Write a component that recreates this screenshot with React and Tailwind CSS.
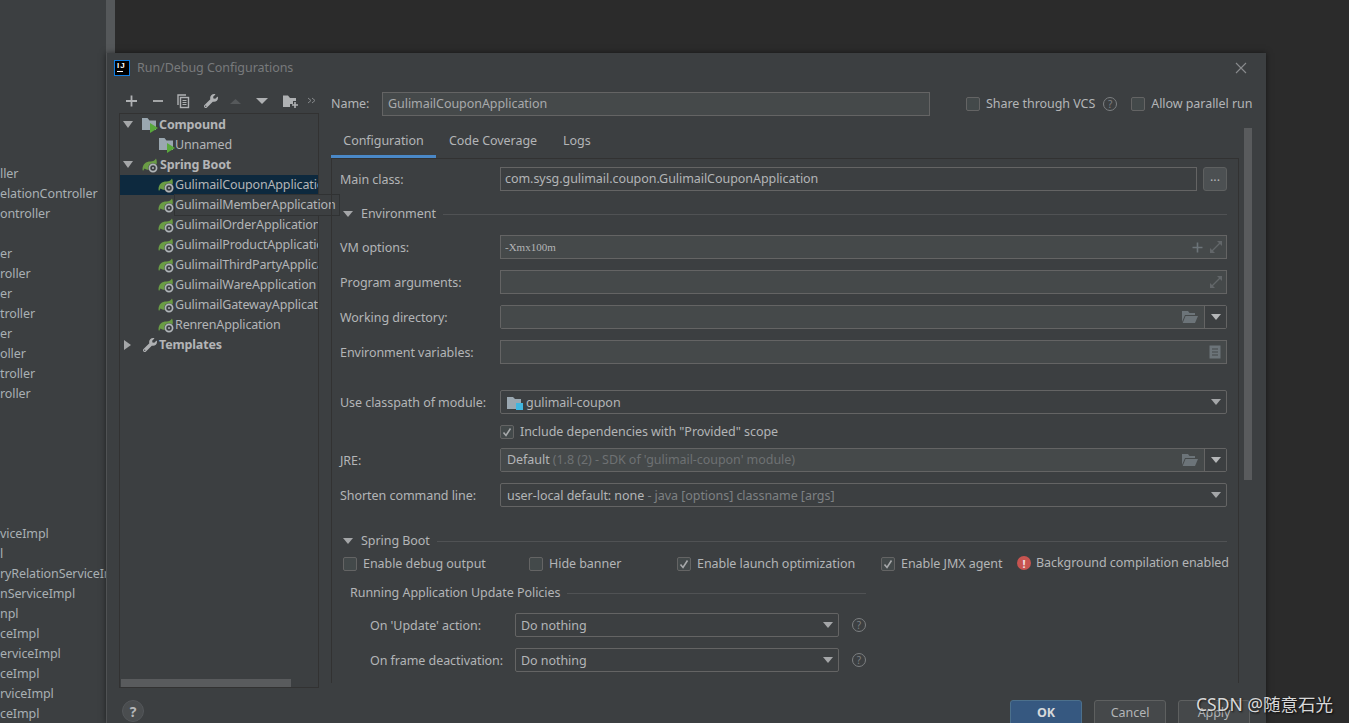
import React from "react";
import { FaWrench } from "react-icons/fa";

const FONT = "font-['Noto_Sans','Noto_Sans_CJK_SC',sans-serif]";

const bgTop = ["", "ller", "elationController", "ontroller", "", "er", "roller", "er", "troller", "er", "oller", "troller", "roller"];
const bgBottom = ["viceImpl", "l", "ryRelationServiceImpl", "nServiceImpl", "npl", "ceImpl", "erviceImpl", "ceImpl", "rviceImpl", "ceImpl"];

function Arrow({ dir = "down", color = "#9da0a2", size = 10 }) {
  const pts = dir === "down" ? "0,1 10,1 5,8" : dir === "right" ? "1,0 8,5 1,10" : "0,8 10,8 5,1";
  return (
    <svg width={size} height={size} viewBox="0 0 10 10" className="shrink-0">
      <polygon points={pts} fill={color} />
    </svg>
  );
}

function FlatArrow({ color = "#a4a6a8" }) {
  return (
    <svg width="10" height="6" viewBox="0 0 10 6" className="shrink-0">
      <polygon points="0,0 10,0 5,6" fill={color} />
    </svg>
  );
}

function SpringIcon() {
  return (
    <svg width="17" height="16" viewBox="0 0 17 16" className="shrink-0">
      <path d="M0.5 12.5 C0.5 7 4 4.5 8.5 4.5 C11 4.5 13 3.5 14 1.5 C15.5 5 15 8.5 12 11 C9 13.5 5 13.5 2.5 11.5 L1 14 Z" fill="#6a9c45" />
      <circle cx="11" cy="11" r="4.8" fill="#3c3f41" />
      <circle cx="11" cy="11" r="3.6" fill="none" stroke="#b0b5b8" strokeWidth="1.7" />
      <circle cx="11" cy="11" r="1" fill="#b0b5b8" />
    </svg>
  );
}

function CompoundIcon() {
  return (
    <svg width="16" height="16" viewBox="0 0 16 16" className="shrink-0">
      <path d="M0 1 H5.5 L7.5 3.5 H14 V13 H0 Z" fill="#9aa7b0" />
      <polygon points="8,6 16,11 8,16" fill="#59a83c" />
    </svg>
  );
}

function FolderOpen() {
  return (
    <svg width="16" height="14" viewBox="0 0 16 14" className="shrink-0">
      <path d="M0 1 H6 L7.5 3 H13 V5 H3 L0 12 Z" fill="#6c7479" />
      <path d="M3.5 6 H16 L13 13 H0.7 Z" fill="#6c7479" />
    </svg>
  );
}

function Expand() {
  return (
    <svg width="14" height="14" viewBox="0 0 14 14" className="shrink-0">
      <polygon points="8,1 13,1 13,6" fill="#626669" />
      <polygon points="1,8 1,13 6,13" fill="#626669" />
      <path d="M11 3 L3 11" stroke="#626669" strokeWidth="1.2" />
    </svg>
  );
}

function PlusSmall() {
  return (
    <svg width="11" height="11" viewBox="0 0 11 11" className="shrink-0">
      <path d="M0.5 5.5 H10.5 M5.5 0.5 V10.5" stroke="#6c7479" strokeWidth="1.6" />
    </svg>
  );
}

function Help({ color = "#7c7f81" }) {
  return (
    <span
      className="flex h-[14px] w-[14px] shrink-0 items-center justify-center rounded-full border text-[10px] leading-none"
      style={{ borderColor: color, color }}
    >
      ?
    </span>
  );
}

function Check({ on }) {
  return (
    <span className="flex h-[14px] w-[14px] shrink-0 items-center justify-center rounded-[2px] border border-[#646464] bg-[#43494a]">
      {on && (
        <svg width="10" height="10" viewBox="0 0 10 10">
          <path d="M1.5 5.5 L4 8.5 L8.5 1.5" fill="none" stroke="#a7a9ab" strokeWidth="1.6" />
        </svg>
      )}
    </span>
  );
}

function Field({ children, className = "", right, bg = "bg-[#45494a]" }) {
  return (
    <div className={`flex h-[24px] items-center justify-between border border-[#646464] pl-[4px] pr-[3px] ${bg} ${className}`}>
      <div className="min-w-0 truncate">{children}</div>
      {right && <div className="flex items-center gap-[6px]">{right}</div>}
    </div>
  );
}

function Row({ label, children, mt }) {
  return (
    <div className="flex items-center" style={{ marginTop: mt }}>
      <div className="w-[160px] shrink-0 whitespace-nowrap pt-[2px]">{label}</div>
      <div className="w-[727px]">{children}</div>
    </div>
  );
}

function Section({ title, mt }) {
  return (
    <div className="flex h-[20px] items-center pr-[11px]" style={{ marginTop: mt }}>
      <span className="ml-[3px] mr-[8px] flex"><FlatArrow /></span>
      <span className="shrink-0">{title}</span>
      <span className="ml-[7px] h-px flex-1 bg-[#505254]" />
    </div>
  );
}

function Combo({ children, className = "w-full pl-[6px]" }) {
  return (
    <div className={`flex h-[24px] items-center justify-between rounded-[2px] border border-[#646464] bg-[#3c3f41] pr-[5px] ${className}`}>
      <div className="flex min-w-0 items-center truncate pt-[2px]">{children}</div>
      <FlatArrow />
    </div>
  );
}

function BrowseCombo({ disabledText, text }) {
  return (
    <div className="flex h-[24px] items-stretch rounded-[2px] border border-[#646464]">
      <div className="flex flex-1 items-center justify-between bg-[#45494a] pl-[6px] pr-[6px]">
        <span>
          {text}
          {disabledText && <span className="text-[#6e7173]"> {disabledText}</span>}
        </span>
        <FolderOpen />
      </div>
      <div className="flex w-[22px] items-center justify-center border-l border-[#646464] bg-[#3c3f41]">
        <FlatArrow color="#b5b7b9" />
      </div>
    </div>
  );
}

function TreeRow({ icon, label, bold, arrow, selected, indent = 38 }) {
  return (
    <div className={`flex h-[20px] items-center whitespace-nowrap ${selected ? "bg-[#0d293e]" : ""}`} style={{ paddingLeft: arrow ? 3 : indent }}>
      {arrow && <span className="mr-[9px] flex"><Arrow dir={arrow} size={10} color="#a4a6a8" /></span>}
      {icon}
      <span className={bold ? "ml-px font-bold" : ""}>{label}</span>
    </div>
  );
}

function Toolbar() {
  const c = "#afb1b3";
  return (
    <div className="ml-[1px] flex h-[20px] items-center">
      <svg width="200" height="16" viewBox="0 0 200 16" className="shrink-0">
        <path d="M6 8 H17 M11.5 2.5 V13.5" stroke={c} strokeWidth="1.8" />
        <path d="M33 8 H43" stroke={c} strokeWidth="1.8" />
        <path d="M58 12 V2 H66" fill="none" stroke={c} strokeWidth="1.4" />
        <rect x="60.5" y="4.5" width="8" height="10" fill="none" stroke={c} strokeWidth="1.4" />
        <path d="M62.5 7.5 H66.5 M62.5 9.5 H66.5 M62.5 11.5 H66.5" stroke={c} strokeWidth="1" />
        <FaWrench x="84" y="1" size="14" color={c} />
        <polygon points="110,11 121,11 115.5,6" fill="#56595b" />
        <polygon points="136,5 148,5 142,11" fill={c} />
        <path d="M163 2.5 H168 L170 5 H176 V8 H173 V11 H170 V14 H163 Z" fill={c} />
        <path d="M172 12 H178 M175 9 V15" stroke={c} strokeWidth="1.6" />
        <path d="M188 5 L191 7.5 L188 10 M192 5 L195 7.5 L192 10" fill="none" stroke="#85888a" strokeWidth="1" />
      </svg>
    </div>
  );
}

export default function App() {
  return (
    <div className={`relative flex h-[723px] w-[1349px] overflow-hidden bg-[#2b2b2b] text-[12.5px] tracking-[-0.05px] text-[#b3b5b7] ${FONT}`}>
      <aside className="h-full w-[106px] shrink-0 overflow-hidden bg-[#3c3f41] whitespace-nowrap pt-[144px] tracking-[-0.1px] text-[#a9b0b4]">
        {bgTop.map((t, i) => (
          <div key={i} className="h-[20px] leading-[20px]">{t}</div>
        ))}
        <div className="h-[120px]" />
        {bgBottom.map((t, i) => (
          <div key={i} className="h-[20px] leading-[20px]">{t}</div>
        ))}
      </aside>
      <div className="h-full w-[9px] shrink-0 bg-[#55585a]" />

      {/* dialog window */}
      <div className="absolute left-[106px] top-[53px] flex h-[670px] w-[1160px] flex-col overflow-hidden border-l border-[#505254] bg-[#3c3f41] shadow-[0_0_6px_rgba(0,0,0,0.5)]">
        {/* title bar */}
        <div className="flex h-[29px] shrink-0 items-center pl-[7px] pr-[19px] pt-[1px]">
          <div className="flex h-[16px] w-[16px] flex-col border border-[#0f7fe6] bg-black px-[2px] pt-[1px]">
            <span className="font-['Liberation_Sans',sans-serif] text-[8px] font-bold leading-[8px] tracking-[1px] text-white">IJ</span>
            <span className="mt-[1px] h-[1px] w-[6px] bg-white" />
          </div>
          <span className="ml-[7px] flex-1 text-[#787a7c]">Run/Debug Configurations</span>
          <svg width="12" height="12" viewBox="0 0 12 12">
            <path d="M1 1 L11 11 M11 1 L1 11" stroke="#8a8c8e" strokeWidth="1.1" />
          </svg>
        </div>

        <div className="flex min-h-0 flex-1">
          {/* left */}
          <div className="ml-[12px] flex w-[200px] shrink-0 flex-col pt-[9px]">
            <div className="relative h-[597px]">
              <Toolbar />
              <div className="relative mt-[2px] flex h-[575px] w-[200px] flex-col border border-[#323232] pt-[1px] tracking-[-0.15px]">
                <div className="h-[558px] overflow-hidden">
                  <TreeRow arrow="down" bold label="Compound" icon={<CompoundIcon />} />
                  <div className="flex h-[20px] items-center pl-[39px]"><CompoundIcon /><span>Unnamed</span></div>
                  <TreeRow arrow="down" bold label="Spring Boot" icon={<SpringIcon />} />
                  <TreeRow selected label="GulimailCouponApplication" icon={<SpringIcon />} />
                  <TreeRow label="GulimailMemberApplication" icon={<SpringIcon />} />
                  <TreeRow label="GulimailOrderApplication" icon={<SpringIcon />} />
                  <TreeRow label="GulimailProductApplication" icon={<SpringIcon />} />
                  <TreeRow label="GulimailThirdPartyApplication" icon={<SpringIcon />} />
                  <TreeRow label="GulimailWareApplication" icon={<SpringIcon />} />
                  <TreeRow label="GulimailGatewayApplication" icon={<SpringIcon />} />
                  <TreeRow label="RenrenApplication" icon={<SpringIcon />} />
                  <div className="flex h-[20px] items-center pl-[3px]">
                    <span className="mr-[9px] flex"><Arrow dir="right" size={10} color="#a4a6a8" /></span>
                    <FaWrench className="ml-[1px] mr-[2px] h-[14px] w-[14px] text-[#afb1b3]" />
                    <span className="font-bold">Templates</span>
                  </div>
                </div>
                <div className="mx-[1px] mt-[6px] h-[8px] w-[170px] bg-[#595b5d]" />
                {/* tooltip overlapping the tree */}
                <div className="absolute left-[54px] top-[80px] flex h-[22px] w-[166px] items-center whitespace-nowrap border border-[#303233] bg-[#3c3f41]">
                  GulimailMemberApplication
                </div>
              </div>
            </div>
            <div className="ml-[3px] mt-[12px] flex h-[22px] w-[22px] shrink-0 items-center justify-center rounded-full border border-[#54575a] bg-[#4a4d4f] text-[14px] font-bold text-[#b5b7b9]">?</div>
          </div>

          {/* right */}
          <div className="ml-[12px] flex w-[921px] shrink-0 flex-col">
            {/* name row */}
            <div className="mt-[10px] flex h-[24px] shrink-0 items-center whitespace-nowrap">
              <span className="w-[51px] shrink-0">Name:</span>
              <div className="flex h-[24px] w-[548px] shrink-0 items-center border border-[#646464] bg-[#45494a] pl-[5px] text-[#a8aaac]">GulimailCouponApplication</div>
              <span className="ml-[36px] flex"><Check /></span>
              <span className="ml-[6px] pt-[1px]">Share through VCS</span>
              <span className="ml-[8px] flex"><Help /></span>
              <span className="ml-[14px] flex"><Check /></span>
              <span className="ml-[6px] pt-[1px]">Allow parallel run</span>
            </div>

            {/* tabs */}
            <div className="mt-[13px] flex h-[29px] shrink-0 items-start">
              <div className="flex h-[29px] w-[105px] items-start justify-center border-b-[3px] border-[#4a88c7] pt-[3px]">Configuration</div>
              <span className="ml-[13px] pt-[3px]">Code Coverage</span>
              <span className="ml-[26px] pt-[3px]">Logs</span>
            </div>

            <div className="relative flex w-[921px]">
              <div className="h-[525px] w-[908px] shrink-0 border-x border-t border-[#323232] pl-[8px]">
                <Row label="Main class:" mt={8}>
                  <div className="flex items-center">
                    <Field className="w-[697px]" bg="bg-[#3c3f41]">com.sysg.gulimail.coupon.GulimailCouponApplication</Field>
                    <div className="ml-[6px] flex h-[24px] w-[24px] items-center justify-center rounded-[3px] border border-[#5e6060] bg-[#4c5052] pb-[4px]">...</div>
                  </div>
                </Row>
                <Section title="Environment" mt={13} />
                <Row label="VM options:" mt={11}>
                  <Field right={<><PlusSmall /><Expand /></>}>
                    <span className="font-['Liberation_Serif',serif] text-[11px] tracking-[0px]">-Xmx100m</span>
                  </Field>
                </Row>
                <Row label="Program arguments:" mt={11}>
                  <Field right={<Expand />}>&nbsp;</Field>
                </Row>
                <Row label="Working directory:" mt={11}>
                  <BrowseCombo text="" />
                </Row>
                <Row label="Environment variables:" mt={11}>
                  <Field right={
                    <svg width="12" height="14" viewBox="0 0 12 14" className="mr-[2px]">
                      <rect x="0.5" y="0.5" width="11" height="13" fill="#6c7479" />
                      <path d="M3 4 H9 M3 7 H9 M3 10 H9" stroke="#45494a" strokeWidth="1" />
                    </svg>
                  }>&nbsp;</Field>
                </Row>
                <Row label="Use classpath of module:" mt={26}>
                  <Combo>
                    <svg width="16" height="14" viewBox="0 0 16 14" className="mr-[3px] shrink-0">
                      <path d="M0 1 H6 L8 3 H14 V13 H0 Z" fill="#9aa7b0" />
                      <rect x="9" y="7" width="7" height="7" fill="#40b6e0" />
                    </svg>
                    gulimail-coupon
                  </Combo>
                </Row>
                <div className="ml-[160px] mt-[8px] flex h-[20px] items-center">
                  <Check on />
                  <span className="ml-[6px]">Include dependencies with "Provided" scope</span>
                </div>
                <Row label="JRE:" mt={6}>
                  <BrowseCombo text="Default" disabledText="(1.8 (2) - SDK of 'gulimail-coupon' module)" />
                </Row>
                <Row label="Shorten command line:" mt={11}>
                  <Combo>
                    <span>user-local default: none<span className="text-[#7e8183]"> - java [options] classname [args]</span></span>
                  </Combo>
                </Row>
                <Section title="Spring Boot" mt={24} />
                <div className="mt-[3px] flex h-[20px] items-center whitespace-nowrap pl-[3px]">
                  <div className="flex w-[186px] items-center"><Check /><span className="ml-[6px]">Enable debug output</span></div>
                  <div className="flex w-[148px] items-center"><Check /><span className="ml-[6px]">Hide banner</span></div>
                  <div className="flex w-[204px] items-center"><Check on /><span className="ml-[6px]">Enable launch optimization</span></div>
                  <div className="flex w-[136px] items-center"><Check on /><span className="ml-[6px]">Enable JMX agent</span></div>
                  <div className="flex items-center pb-[2px]">
                    <span className="flex h-[14px] w-[14px] items-center justify-center rounded-full bg-[#c75450] text-[11px] font-bold leading-none text-[#f0e0e0]">!</span>
                    <span className="ml-[5px]">Background compilation enabled</span>
                  </div>
                </div>
                <div className="ml-[10px] mt-[9px] flex h-[20px] w-[516px] items-center">
                  <span className="shrink-0">Running Application Update Policies</span>
                  <span className="ml-[7px] h-px flex-1 bg-[#505254]" />
                </div>
                <div className="ml-[30px] mt-[10px] flex items-center">
                  <span className="w-[145px] shrink-0 pt-[2px]">On 'Update' action:</span>
                  <Combo className="w-[324px] pl-[5px]">Do nothing</Combo>
                  <span className="ml-[13px] flex"><Help /></span>
                </div>
                <div className="ml-[30px] mt-[11px] flex items-center">
                  <span className="w-[145px] shrink-0 pt-[2px]">On frame deactivation:</span>
                  <Combo className="w-[324px] pl-[5px]">Do nothing</Combo>
                  <span className="ml-[13px] flex"><Help /></span>
                </div>
              </div>
              <div className="absolute left-[913px] top-[-30px] h-[352px] w-[8px] bg-[#595b5d]" />
            </div>

            {/* buttons */}
            <div className="mt-[17px] flex shrink-0 gap-[12px] pl-[679px]">
              <div className="flex h-[26px] w-[72px] shrink-0 items-center justify-center rounded-[3px] border border-[#4c708c] bg-[#365880] font-bold text-[#d5d8db]">OK</div>
              <div className="flex h-[26px] w-[72px] shrink-0 items-center justify-center rounded-[3px] border border-[#5e6060] bg-[#45484a]">Cancel</div>
              <div className="flex h-[26px] w-[72px] shrink-0 items-center justify-center rounded-[3px] border border-[#5e6060] bg-[#45484a]">Apply</div>
            </div>
          </div>
        </div>
      </div>

      <div className="absolute left-[1196px] top-[692px] whitespace-nowrap text-[17.5px] leading-[24px] tracking-normal text-[#d8d8d8] [text-shadow:1px_1px_2px_rgba(0,0,0,0.8)]">
        CSDN @随意石光
      </div>
    </div>
  );
}
